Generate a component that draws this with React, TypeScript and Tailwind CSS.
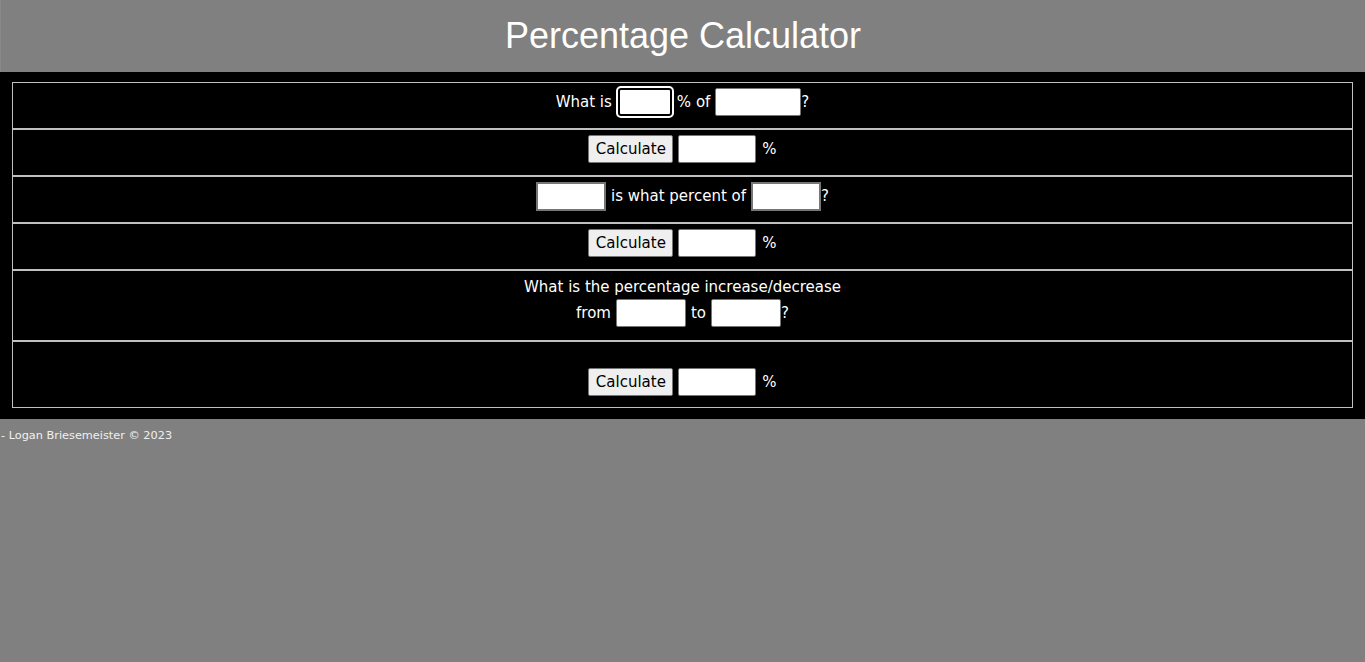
import React from "react";

const inputBase =
  "h-[28px] rounded-[2px] border border-[#767676] bg-white text-black outline-none";

function Calc({ w = "w-[78px]" }: { w?: string }) {
  return (
    <div className="flex items-center">
      <button className="h-[28px] w-[85px] rounded-[2px] border border-[#767676] bg-[#efefef] text-[15px] text-black">
        Calculate
      </button>
      <input className={`${inputBase} ml-[5px] ${w}`} readOnly />
      <span className="ml-[6px]">%</span>
    </div>
  );
}

export default function App() {
  return (
    <div className="min-h-[662px] bg-[#808080] font-['DejaVu_Sans',sans-serif] text-white">
      <header className="flex h-[72px] items-center justify-center border-l border-[#8a8a8a]">
        <h1 className="font-['Liberation_Sans',Arial,sans-serif] text-[36px] leading-none">
          Percentage Calculator
        </h1>
      </header>
      <main className="bg-black px-[12px] pt-[10px] pb-[11px] text-[15px]">
        <div className="flex flex-col">
          <div className="flex h-[47px] items-start justify-center border border-[#c0c0c0] pt-[5px]">
            <div className="flex items-center">
              <span>What is</span>
              <input
                className="ml-[6px] h-[28px] w-[54px] rounded-[3px] border-2 border-black bg-white text-black outline outline-2 outline-white"
                readOnly
                autoFocus
              />
              <span className="ml-[5px]">% of</span>
              <input className={`${inputBase} ml-[5px] w-[86px]`} readOnly />
              <span>?</span>
            </div>
          </div>
          <div className="flex h-[47px] items-start justify-center border border-[#c0c0c0] pt-[5px]">
            <Calc />
          </div>
          <div className="flex h-[47px] items-start justify-center border border-[#c0c0c0] pt-[5px]">
            <div className="flex items-center">
              <input className="h-[29px] w-[70px] border-2 border-[#767676] bg-white" readOnly />
              <span className="ml-[5px]">is what percent of</span>
              <input className="ml-[5px] h-[29px] w-[70px] border-2 border-[#767676] bg-white" readOnly />
              <span>?</span>
            </div>
          </div>
          <div className="flex h-[47px] items-start justify-center border border-[#c0c0c0] pt-[5px]">
            <Calc />
          </div>
          <div className="flex h-[71px] flex-col items-center border border-[#c0c0c0] pt-[5px]">
            <div className="h-[23px] leading-[23px]">What is the percentage increase/decrease</div>
            <div className="flex items-center">
              <span>from</span>
              <input className={`${inputBase} ml-[5px] w-[70px]`} readOnly />
              <span className="ml-[5px]">to</span>
              <input className={`${inputBase} ml-[5px] w-[70px]`} readOnly />
              <span>?</span>
            </div>
          </div>
          <div className="flex h-[67px] items-start justify-center border border-[#c0c0c0] pt-[26px]">
            <Calc />
          </div>
        </div>
      </main>
      <footer className="pl-[1px] pt-[9px] text-[11.3px] text-[#f0f0f0]">
        - Logan Briesemeister © 2023
      </footer>
    </div>
  );
}
